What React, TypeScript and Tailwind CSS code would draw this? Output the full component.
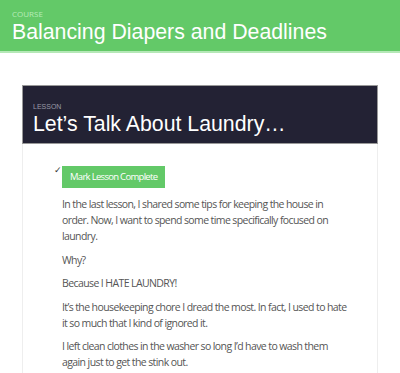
export default function App() {
  const body = "text-[10.5px] tracking-[-0.6px] leading-[16px] text-[#555] mb-[7.5px]";
  return (
    <div className="w-[400px] h-[373px] overflow-hidden bg-white font-['Open_Sans',sans-serif]">
      <div className="bg-[#63c968] border-b-2 border-[#b5e8b7] px-3 pt-[9px] pb-[6px]">
        <div className="text-[8px] leading-[10px] text-[#b7ecb9]">COURSE</div>
        <h1 className="text-[21.3px] leading-[26px] text-white font-['Liberation_Sans',Arial,sans-serif]">
          Balancing Diapers and Deadlines
        </h1>
      </div>
      <div className="px-[22px] pt-[32px]">
        <div className="border border-[#eee]">
          <div className="bg-[#232234] border border-[#999] -m-px px-[10px] pt-[17px] pb-[6px]">
            <div className="text-[7px] leading-[8px] text-[#9a9aa6] font-['Liberation_Sans',Arial,sans-serif]">LESSON</div>
            <h2 className="text-[21.3px] leading-[26px] text-white font-['Liberation_Sans',Arial,sans-serif]">
              Let’s Talk About Laundry…
            </h2>
          </div>
          <div className="pl-[39px] pt-[19px] pb-4">
            <div className="relative mb-[8px]">
              <span className="absolute -left-[8px] top-[1px] text-[9px] text-[#333]">✓</span>
              <button className="bg-[#63c968] text-white text-[9.5px] tracking-[-0.7px] px-[8px] h-[22px]">
                Mark Lesson Complete
              </button>
            </div>
            <div className="max-w-[286px]">
              <p className={body}>
                In the last lesson, I shared some tips for keeping the house in order. Now, I want to spend some time specifically focused on laundry.
              </p>
              <p className={body}>Why?</p>
              <p className={body}>Because I HATE LAUNDRY!</p>
              <p className={body}>
                It’s the housekeeping chore I dread the most. In fact, I used to hate it so much that I kind of ignored it.
              </p>
              <p className={body}>
                I left clean clothes in the washer so long I’d have to wash them again just to get the stink out.
              </p>
            </div>
          </div>
        </div>
      </div>
    </div>
  );
}
